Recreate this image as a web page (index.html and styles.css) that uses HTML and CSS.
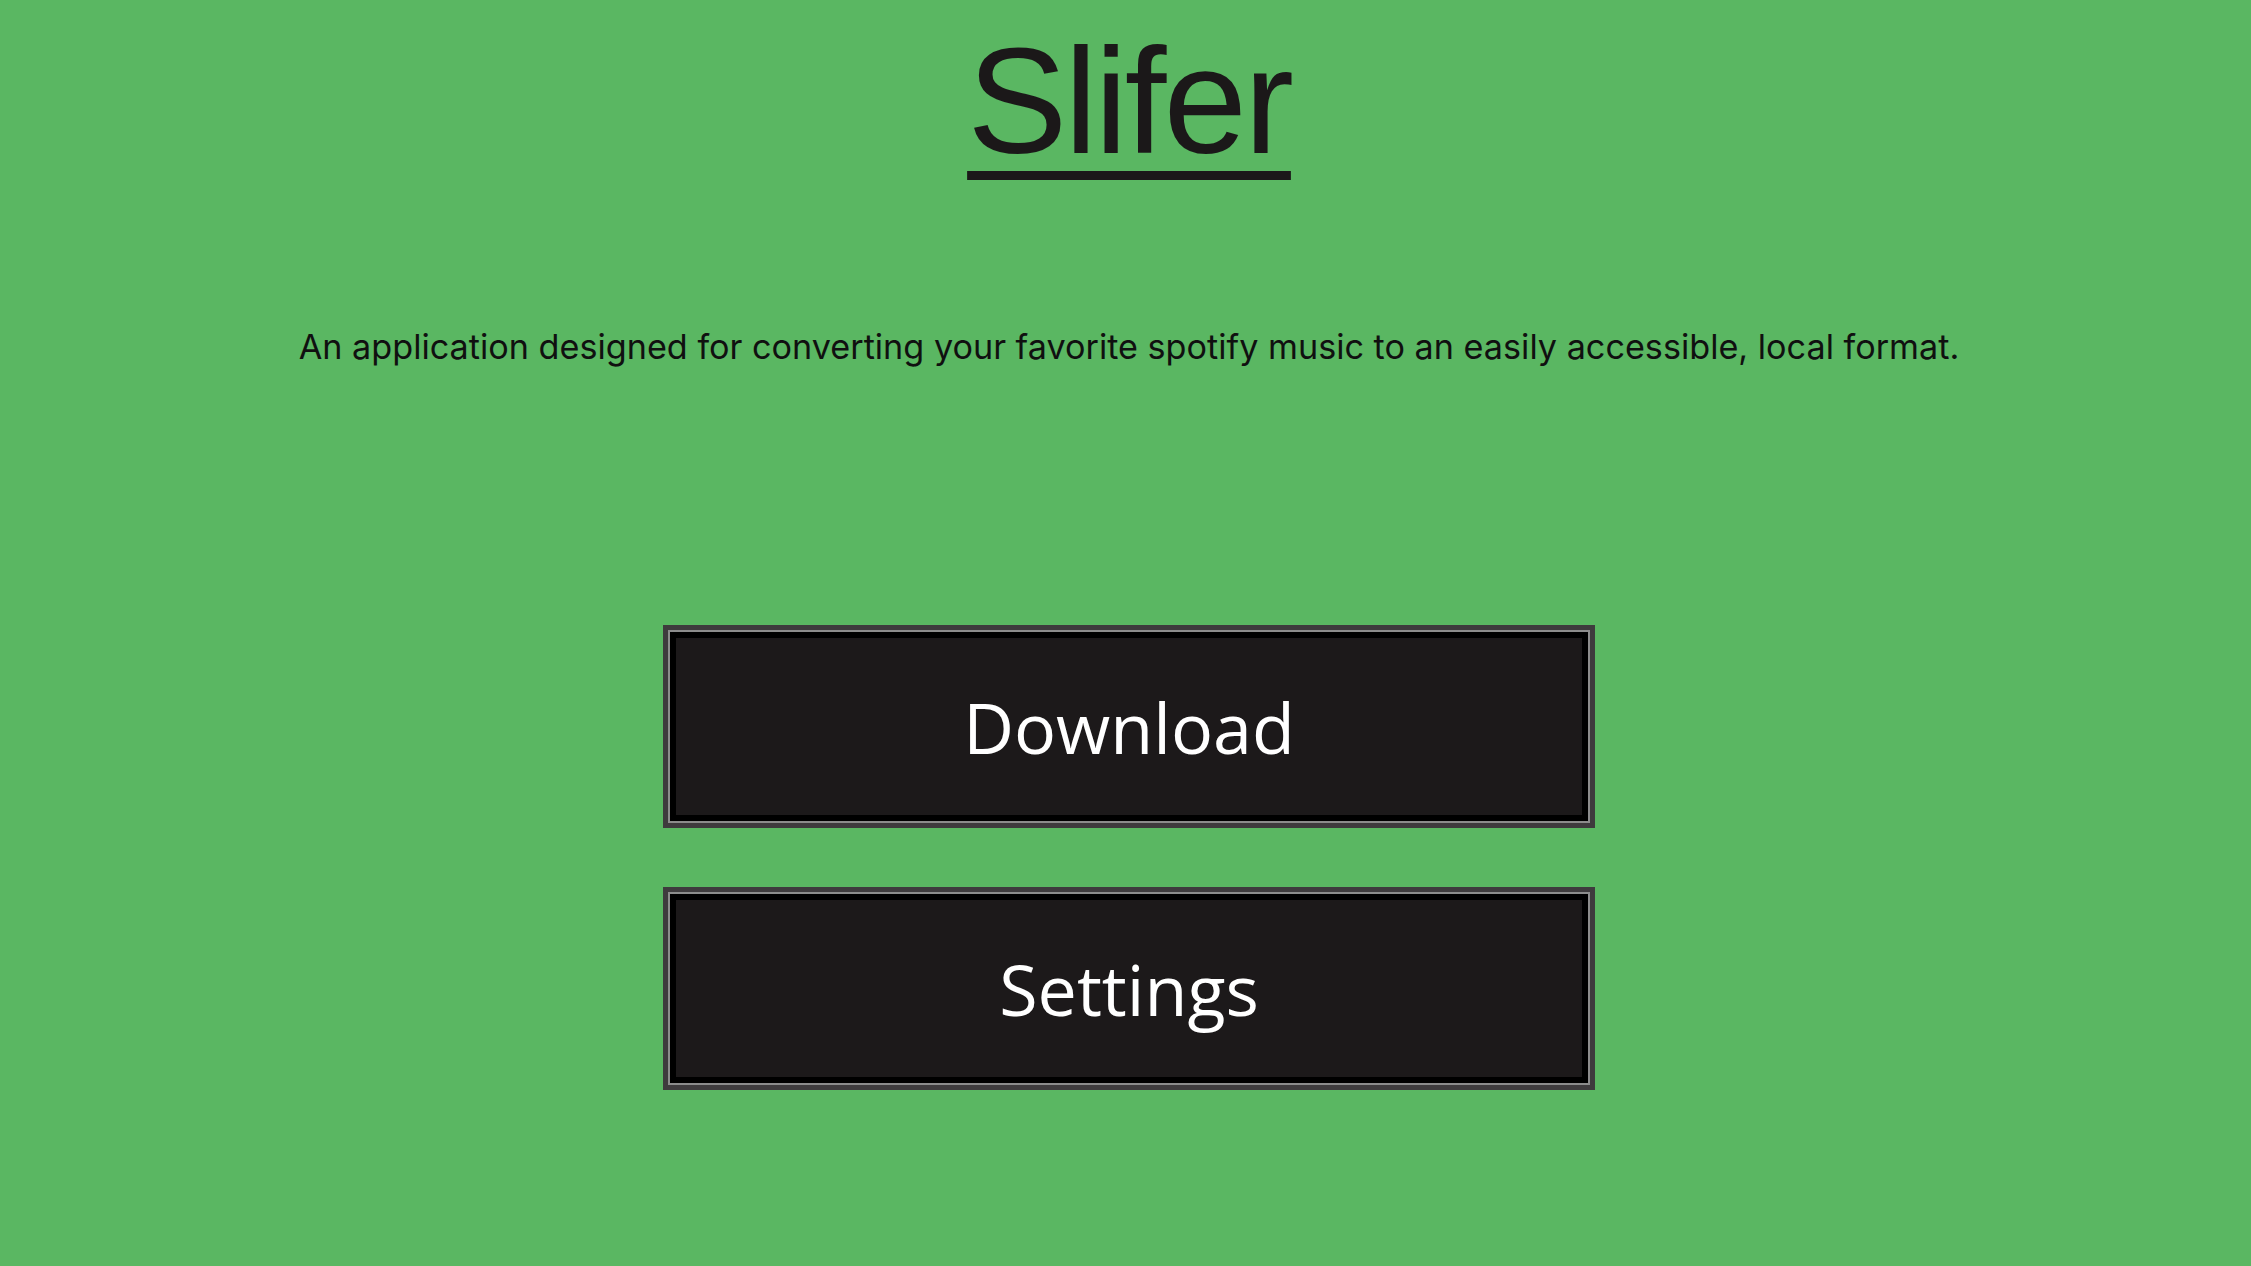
FILE: index.html
```html
<!DOCTYPE html>
<html lang="en">
<head>
<meta charset="utf-8">
<title>Slifer</title>
<link rel="stylesheet" href="styles.css">
</head>
<body>
<main class="page">
  <h1 class="title">Slifer</h1>
  <p class="tagline">An application designed for converting your favorite spotify music to an easily accessible, local format.</p>
  <div class="actions">
    <button class="btn" type="button">Download</button>
    <button class="btn" type="button">Settings</button>
  </div>
</main>
</body>
</html>
```

FILE: styles.css
```css
html, body {
  margin: 0;
  padding: 0;
  height: 100%;
}
body {
  background: #5ab762;
  font-family: "Liberation Sans", Arial, sans-serif;
  overflow: hidden;
}
.page {
  display: flex;
  flex-direction: column;
  align-items: center;
  padding-left: 7px;
  min-height: 100%;
  box-sizing: border-box;
}
.title {
  margin: 26px 0 0;
  font-size: 150px;
  line-height: 1;
  font-weight: 400;
  letter-spacing: -3px;
  color: #1b1819;
  text-decoration: underline;
  text-decoration-thickness: 9px;
  text-underline-offset: 18px;
}
.tagline {
  margin: 150px 0 0;
  font-family: Inter, "Liberation Sans", sans-serif;
  font-size: 34.2px;
  line-height: 42px;
  color: #101010;
  white-space: nowrap;
}
.actions {
  margin-top: 257px;
  display: flex;
  flex-direction: column;
  gap: 59px;
}
.btn {
  width: 932px;
  height: 203px;
  box-sizing: border-box;
  border: 5px solid #3e3b3d;
  background: #1c191a;
  box-shadow: inset 0 0 0 2px #8c8c8c, inset 0 0 0 8px #000;
  color: #ffffff;
  font-family: "Open Sans", sans-serif;
  font-size: 70px;
  display: flex;
  align-items: center;
  justify-content: center;
  padding: 0;
  cursor: pointer;
}
```
